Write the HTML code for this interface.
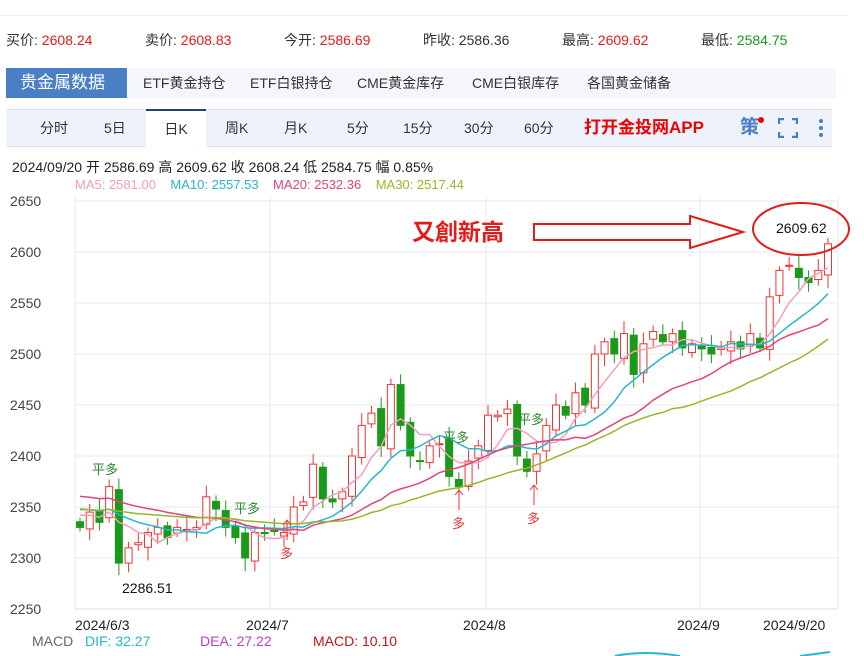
<!DOCTYPE html>
<html><head><meta charset="utf-8"><style>
body{margin:0;width:864px;height:656px;overflow:hidden;background:#fff;font-family:"Liberation Sans","Noto Sans CJK SC",sans-serif;position:relative}
.a{position:absolute;white-space:nowrap}
.q{top:30px;font-size:14px;color:#333}
.r{color:#e21b1b}.g{color:#1a9a1a}
.tabs{position:absolute;left:6px;top:68px;height:30px;width:830px;background:#f4f6f9}
.tabs span{position:absolute;top:0;font-size:14px;color:#333;line-height:30px}
.tabs .on{left:0;background:#4a7ec5;color:#fff;font-size:17px;padding:0 14px;width:93px}
.bar{position:absolute;left:6px;top:109px;width:826px;height:36px;background:#eef3fb;border-top:1px solid #d6e3f5;border-bottom:1px solid #d6e3f5}
.bar span{position:absolute;top:0;line-height:36px;font-size:14px;color:#333}
</style></head><body>
<div style="position:absolute;left:0;top:15px;width:848px;border-top:1px solid #eee"></div>
<div class="a q" style="left:6px">买价: <span class="r">2608.24</span></div>
<div class="a q" style="left:145px">卖价: <span class="r">2608.83</span></div>
<div class="a q" style="left:284px">今开: <span class="r">2586.69</span></div>
<div class="a q" style="left:423px">昨收: <span>2586.36</span></div>
<div class="a q" style="left:562px">最高: <span class="r">2609.62</span></div>
<div class="a q" style="left:701px">最低: <span class="g">2584.75</span></div>
<div class="tabs"><span class="on">贵金属数据</span><span style="left:137px">ETF黄金持仓</span><span style="left:244px">ETF白银持仓</span><span style="left:351px">CME黄金库存</span><span style="left:466px">CME白银库存</span><span style="left:581px">各国黄金储备</span></div>
<div class="bar">
<span style="left:34px">分时</span><span style="left:98px">5日</span>
<span style="left:140px;width:60px;text-align:center;background:#fff;border-top:2px solid #1f3f7a;top:-1px;height:37px">日K</span>
<span style="left:219px">周K</span><span style="left:278px">月K</span><span style="left:341px">5分</span><span style="left:397px">15分</span><span style="left:458px">30分</span><span style="left:518px">60分</span>
<span style="left:578px;color:#e00;font-weight:bold;font-size:17px">打开金投网APP</span>
<span style="left:734px;color:#4a7ec5;font-size:19px;font-weight:bold">策</span>
<div style="position:absolute;left:752px;top:7px;width:6px;height:6px;border-radius:3px;background:#e00"></div>
<svg style="position:absolute;left:772px;top:8px" width="20" height="20"><path d="M1 6V1h5M14 1h5v5M19 14v5h-5M6 19H1v-5" stroke="#4a7ec5" stroke-width="2.4" fill="none"/></svg>
<svg style="position:absolute;left:812px;top:8px" width="6" height="20"><circle cx="3" cy="3" r="2" fill="#4a7ec5"/><circle cx="3" cy="10" r="2" fill="#4a7ec5"/><circle cx="3" cy="17" r="2" fill="#4a7ec5"/></svg>
</div>
<div class="a" style="left:12px;top:157px;font-size:14px;color:#222">2024/09/20 开 2586.69 高 2609.62 收 2608.24 低 2584.75 幅 0.85%</div>
<div class="a" style="left:75px;top:177px;font-size:13px"><span style="color:#f0a0b8">MA5: 2581.00</span>&nbsp;&nbsp;&nbsp; <span style="color:#27b6cc">MA10: 2557.53</span>&nbsp;&nbsp;&nbsp; <span style="color:#e0447a">MA20: 2532.36</span>&nbsp;&nbsp;&nbsp; <span style="color:#9ab52a">MA30: 2517.44</span></div>
<svg id="c" style="position:absolute;left:0;top:190px" width="864" height="466" font-family="Liberation Sans,Noto Sans CJK SC,sans-serif"></svg>
<script>
var s=document.getElementById('c'),o='';
function Y(v){return 11+(2650-v)*1.02;}
var yl=[2650,2600,2550,2500,2450,2400,2350,2300,2250];
yl.forEach(function(v){o+='<line x1="75" x2="838" y1="'+Y(v)+'" y2="'+Y(v)+'" stroke="#e8e8e8"/>';o+='<text x="10" y="'+(Y(v)+5)+'" font-size="14" fill="#444">'+v+'</text>';});
[75,270,486,700,838].forEach(function(x){o+='<line x1="'+x+'" x2="'+x+'" y1="5" y2="419" stroke="#e8e8e8"/>';});
o+='<line x1="75" x2="838" y1="419" y2="419" stroke="#ddd"/>';
var cl=[2330,2345,2335,2370,2295,2310,2315,2325,2330,2320,2330,2328,2330,2360,2348,2330,2320,2300,2325,2324,2326,2325,2350,2355,2392,2358,2355,2365,2400,2430,2442,2410,2470,2430,2400,2395,2410,2412,2380,2370,2395,2410,2440,2440,2446,2400,2385,2402,2430,2450,2440,2462,2450,2500,2512,2500,2520,2480,2510,2522,2512,2520,2506,2510,2505,2500,2506,2512,2505,2520,2506,2556,2582,2587,2575,2570,2582,2608];
var n=cl.length,x0=80,dx=(828-80)/(n-1),pv=2340;
for(var i=0;i<n;i++){var x=x0+i*dx,c=cl[i],op=pv+((i*37)%7-3)*1.5;var hi=Math.max(op,c)+4+(i*13)%9,lo=Math.min(op,c)-4-(i*7)%10;var up=c>=op,col=up?'#e33':'#1a9a1a';
o+='<line x1="'+x+'" x2="'+x+'" y1="'+Y(hi)+'" y2="'+Y(lo)+'" stroke="'+col+'"/>';
var t=Y(Math.max(op,c)),h=Math.max(1,Y(Math.min(op,c))-t);
o+='<rect x="'+(x-3.5)+'" y="'+t+'" width="7" height="'+h+'" fill="'+(up?'#fff':col)+'" stroke="'+col+'"/>';pv=c;}
function ma(p,col,seed){var d='';for(var i=0;i<n;i++){var s2=0,k=0;for(var j=Math.max(0,i-p+1);j<=i;j++){s2+=cl[j];k++;}var b=(s2+seed*(p-k))/p;d+=(i?'L':'M')+(x0+i*dx).toFixed(1)+' '+Y(b).toFixed(1);}o+='<path d="'+d+'" fill="none" stroke="'+col+'" stroke-width="1.5"/>';}
ma(5,'#f0a0b8',2345);ma(10,'#27b6cc',2350);ma(20,'#e0447a',2362);ma(30,'#9ab52a',2348);
o+='<text x="122" y="403" font-size="14" fill="#111">2286.51</text>';
[[92,'平多'],[234,'平多'],[443,'平多'],[518,'平多']].forEach(function(a){o+='<text x="'+a[0]+'" y="'+(a[0]<200?284:a[0]<300?323:a[0]<500?252:234)+'" font-size="13" fill="#2a8a2a">'+a[1]+'</text>';});
[[287,330],[459,300],[534,295]].forEach(function(a){o+='<path d="M'+a[0]+' '+(a[1]+20)+'V'+a[1]+'M'+(a[0]-4)+' '+(a[1]+5)+'L'+a[0]+' '+a[1]+'L'+(a[0]+4)+' '+(a[1]+5)+'" stroke="#e33" fill="none"/><text x="'+(a[0]-7)+'" y="'+(a[1]+38)+'" font-size="13" fill="#e33">多</text>';});
o+='<text x="412" y="50" font-size="23" font-weight="bold" fill="#e21b1b">又創新高</text>';
o+='<path d="M534 34H690V26L743 42L690 58V50H534Z" fill="none" stroke="#e21b1b" stroke-width="2"/>';
o+='<ellipse cx="801" cy="39" rx="48" ry="26" fill="none" stroke="#e21b1b" stroke-width="2"/>';
o+='<text x="776" y="43" font-size="14" fill="#111">2609.62</text>';
[[75,'2024/6/3'],[246,'2024/7'],[463,'2024/8'],[677,'2024/9'],[763,'2024/9/20']].forEach(function(a){o+='<text x="'+a[0]+'" y="440" font-size="14" fill="#222">'+a[1]+'</text>';});
o+='<text x="32" y="456" font-size="14" fill="#666">MACD</text><text x="85" y="456" font-size="14" fill="#27b6cc">DIF: 32.27</text><text x="200" y="456" font-size="14" fill="#c03fc0">DEA: 27.22</text><text x="313" y="456" font-size="14" fill="#c0141a">MACD: 10.10</text>';
o+='<path d="M615 466Q645 460 680 466M800 466L830 462" stroke="#27b6cc" stroke-width="2" fill="none"/>';
s.innerHTML=o;
</script>
</body></html>
